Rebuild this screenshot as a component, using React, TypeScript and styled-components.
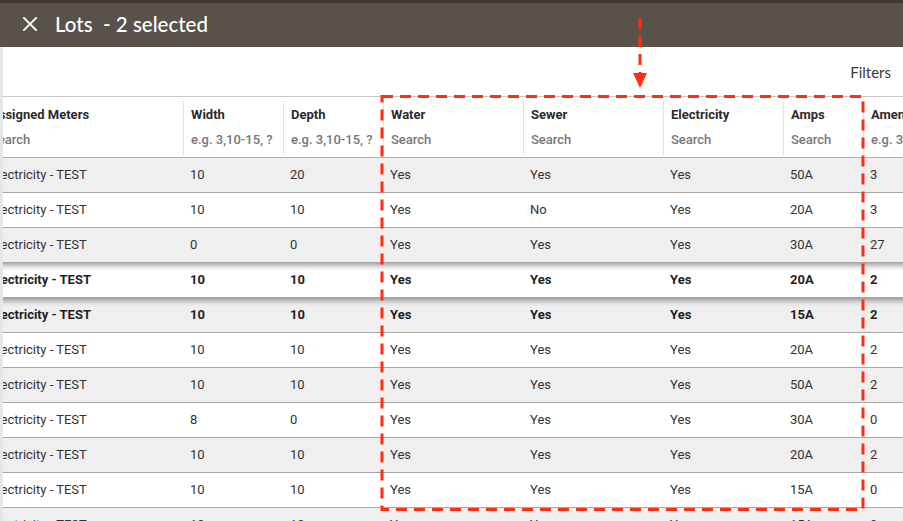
import React from 'react';
import styled, { createGlobalStyle, css } from 'styled-components';

const GlobalStyle = createGlobalStyle`
  html, body {
    margin: 0;
    padding: 0;
    background: #ffffff;
    overflow: hidden;
  }
  body {
    font-family: Roboto, "Liberation Sans", sans-serif;
  }
`

interface Column {
  title: string;
  hint: string;
  width: number;
}

const columns: Column[] = [
  { title: 'Assigned Meters', hint: 'Search', width: 200 },
  { title: 'Width', hint: 'e.g. 3,10-15, ?', width: 100 },
  { title: 'Depth', hint: 'e.g. 3,10-15, ?', width: 100 },
  { title: 'Water', hint: 'Search', width: 140 },
  { title: 'Sewer', hint: 'Search', width: 140 },
  { title: 'Electricity', hint: 'Search', width: 120 },
  { title: 'Amps', hint: 'Search', width: 80 },
  { title: 'Amenities', hint: 'e.g. 3,10-15, ?', width: 120 },
]

interface Lot {
  cells: string[];
  selected?: boolean;
}

const lots: Lot[] = [
  { cells: ['Electricity - TEST', '10', '20', 'Yes', 'Yes', 'Yes', '50A', '3'] },
  { cells: ['Electricity - TEST', '10', '10', 'Yes', 'No', 'Yes', '20A', '3'] },
  { cells: ['Electricity - TEST', '0', '0', 'Yes', 'Yes', 'Yes', '30A', '27'] },
  { cells: ['Electricity - TEST', '10', '10', 'Yes', 'Yes', 'Yes', '20A', '2'], selected: true },
  { cells: ['Electricity - TEST', '10', '10', 'Yes', 'Yes', 'Yes', '15A', '2'], selected: true },
  { cells: ['Electricity - TEST', '10', '10', 'Yes', 'Yes', 'Yes', '20A', '2'] },
  { cells: ['Electricity - TEST', '10', '10', 'Yes', 'Yes', 'Yes', '50A', '2'] },
  { cells: ['Electricity - TEST', '8', '0', 'Yes', 'Yes', 'Yes', '30A', '0'] },
  { cells: ['Electricity - TEST', '10', '10', 'Yes', 'Yes', 'Yes', '20A', '2'] },
  { cells: ['Electricity - TEST', '10', '10', 'Yes', 'Yes', 'Yes', '15A', '0'] },
  { cells: ['Electricity - TEST', '10', '10', 'Yes', 'Yes', 'Yes', '15A', '0'] },
]

const Page = styled.div`
  position: relative;
  width: 903px;
  height: 521px;
  overflow: hidden;
  display: flex;
  flex-direction: column;
`

const TopBar = styled.div`
  display: flex;
  align-items: center;
  gap: 17px;
  box-sizing: border-box;
  height: 47px;
  padding: 0 0 3px 22px;
  background: #58524b;
  border-top: 3px solid #403b36;
  flex-shrink: 0;
`

const CloseButton = styled.button`
  display: flex;
  align-items: center;
  justify-content: center;
  width: 16px;
  height: 16px;
  padding: 0;
  border: none;
  background: transparent;
  cursor: pointer;
`

const Title = styled.h1`
  margin: 0;
  font-family: Lato, "Open Sans", sans-serif;
  font-size: 20.5px;
  font-weight: 500;
  color: #ffffff;
  white-space: pre;
`

const FilterBar = styled.div`
  display: flex;
  justify-content: flex-end;
  align-items: center;
  height: 49px;
  padding-right: 12px;
  border-left: 3px solid #e6e6e6;
  flex-shrink: 0;
`

const FilterLink = styled.span`
  font-family: Lato, "Open Sans", sans-serif;
  font-size: 15px;
  color: #3a3a3a;
`

const TableViewport = styled.div`
  flex: 1;
  overflow: hidden;
  border-left: 3px solid #e6e6e6;
`

const Table = styled.div`
  display: flex;
  flex-direction: column;
  margin-left: -20px;
  width: max-content;
`

const HeaderRow = styled.div`
  display: flex;
  height: 60px;
  border-top: 1px solid #c8c8c8;
  border-bottom: 1px solid #b4b0b0;
  background: #ffffff;
`

const HeaderCell = styled.div<{ $w: number; $first?: boolean }>`
  display: flex;
  flex-direction: column;
  gap: 9px;
  box-sizing: border-box;
  width: ${p => p.$w}px;
  padding: 6px 7px 0;
  margin: 4px 0 2px;
  border-left: ${p => (p.$first ? 'none' : '1px solid #e2e2e2')};
  white-space: nowrap;
  overflow: hidden;
`

const HeaderTitle = styled.span`
  font-size: 13px;
  font-weight: 700;
  color: #2b2b2b;
  line-height: 16px;
`

const HeaderHint = styled.span`
  font-size: 13px;
  font-weight: 500;
  color: #777777;
  line-height: 16px;
`

const Row = styled.div<{ $odd: boolean; $selected?: boolean }>`
  display: flex;
  align-items: center;
  height: 34px;
  border-bottom: 1px solid #aaa5a5;
  background: ${p => (p.$odd ? '#efefef' : '#ffffff')};
  ${p => p.$selected && css`
    box-shadow: inset 0 7px 6px -5px rgba(0, 0, 0, 0.45);
  `}
`

const Cell = styled.div<{ $w: number; $bold?: boolean }>`
  box-sizing: border-box;
  width: ${p => p.$w}px;
  padding: 0 7px 1px;
  font-size: 13px;
  font-weight: ${p => (p.$bold ? 700 : 400)};
  color: ${p => (p.$bold ? '#1f1f1f' : '#333333')};
  white-space: nowrap;
  overflow: hidden;
`

const Annotation = styled.svg`
  position: absolute;
  left: 0;
  top: 0;
  pointer-events: none;
`

const CloseIcon = () => (
  <svg width="16" height="16" viewBox="0 0 16 16">
    <path d="M2 2 L14 14 M14 2 L2 14" stroke="#ffffff" strokeWidth="1.8" strokeLinecap="square" />
  </svg>
)

export default function App() {
  return (
    <>
      <GlobalStyle />
      <Page>
        <TopBar>
          <CloseButton aria-label="close">
            <CloseIcon />
          </CloseButton>
          <Title>{'Lots  - 2 selected'}</Title>
        </TopBar>
        <FilterBar>
          <FilterLink>Filters</FilterLink>
        </FilterBar>
        <TableViewport>
          <Table>
            <HeaderRow>
              {columns.map((c, i) => (
                <HeaderCell key={c.title} $w={c.width} $first={i === 0}>
                  <HeaderTitle>{c.title}</HeaderTitle>
                  <HeaderHint>{c.hint}</HeaderHint>
                </HeaderCell>
              ))}
            </HeaderRow>
            {lots.map((lot, r) => (
              <Row key={r} $odd={r % 2 === 0} $selected={lot.selected}>
                {lot.cells.map((v, i) => (
                  <Cell key={i} $w={columns[i].width} $bold={lot.selected}>{v}</Cell>
                ))}
              </Row>
            ))}
          </Table>
        </TableViewport>
        <Annotation width="903" height="521" viewBox="0 0 903 521">
          <g stroke="#ff2d12" strokeWidth="3" fill="none" strokeDasharray="11 7">
            <path d="M640 18 L640 76" />
            <rect x="382" y="96.5" width="481" height="413" />
          </g>
          <path d="M633 73 L647 73 L640 88 Z" fill="#ff2d12" />
        </Annotation>
      </Page>
    </>
  )
}
